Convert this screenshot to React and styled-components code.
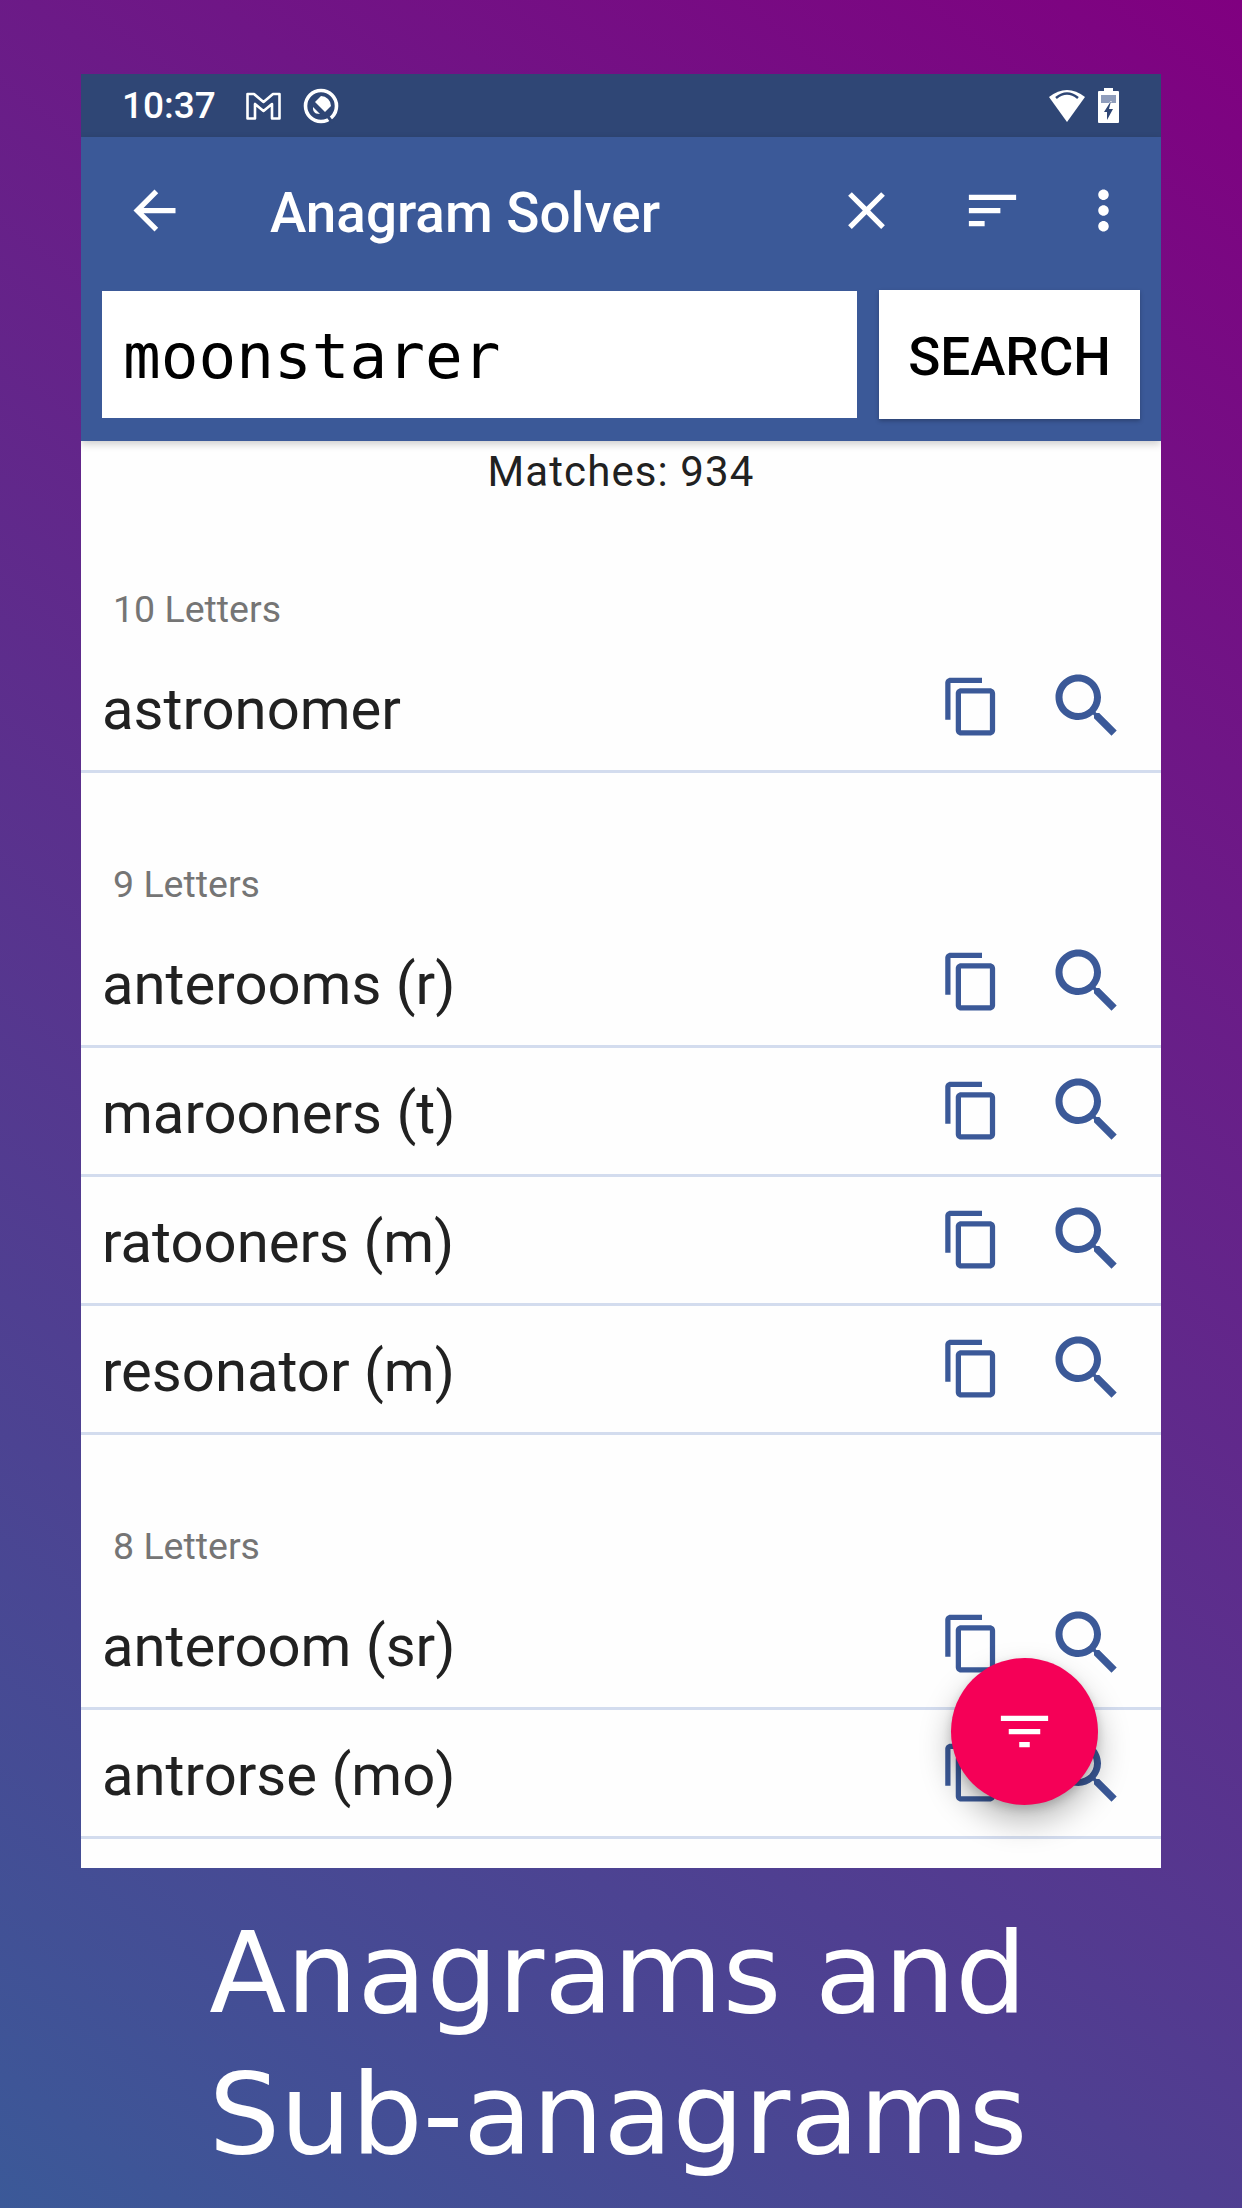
import React from 'react';
import styled, { createGlobalStyle } from 'styled-components';

const GlobalStyle = createGlobalStyle`
  html, body {
    margin: 0;
    padding: 0;
  }
  * { box-sizing: border-box; }
`;

const Page = styled.div`
  width: 1242px;
  height: 2208px;
  overflow: hidden;
  padding-top: 74px;
  background: linear-gradient(37deg, #3b5998 0%, #800080 100%);
  font-family: Roboto, sans-serif;
`;

const Phone = styled.div`
  position: relative;
  width: 1080px;
  height: 1794px;
  margin-left: 81px;
  background: #fefefe;
  overflow: hidden;
`;

const StatusBar = styled.div`
  height: 63px;
  background: #2f4675;
  display: flex;
  align-items: center;
  padding: 0 42px 0 41px;
  color: #fff;
`;

const Time = styled.span`
  font-size: 37px;
  font-weight: 500;
  margin-right: 30px;
`;

const MailGlyph = styled.svg`
  width: 35px;
  height: 28px;
  fill: none;
  stroke: #fff;
  stroke-width: 2.6;
  stroke-linejoin: round;
`;

const RingGlyph = styled.svg`
  width: 38px;
  height: 38px;
  margin-left: 21px;
`;

const StatusRight = styled.div`
  margin-left: auto;
  display: flex;
  align-items: center;
  gap: 13px;
`;

const AppBar = styled.header`
  background: #3b5998;
  height: 304px;
  box-shadow: 0 3px 8px rgba(0, 0, 0, 0.2);
  position: relative;
  z-index: 1;
`;

const Toolbar = styled.div`
  height: 146px;
  display: flex;
  align-items: center;
  padding: 0 26px 0 42px;
  color: #fff;
`;

const Title = styled.h1`
  margin: 0 auto 0 84px;
  padding-top: 6px;
  font-size: 54.8px;
  font-weight: 500;
  color: #fff;
`;

const ActionIcon = styled.svg`
  width: 63px;
  height: 63px;
  fill: currentColor;
  margin-left: ${({ $gap }) => $gap || 0}px;
  flex-shrink: 0;
`;

const SearchRow = styled.div`
  display: flex;
  align-items: center;
  margin-top: 7px;
  padding: 0 21px;
  gap: 22px;
`;

const SearchField = styled.div`
  flex: 1;
  height: 127px;
  background: #fff;
  padding: 4px 0 0 21px;
  display: flex;
  align-items: center;
  font-family: "DejaVu Sans Mono", monospace;
  font-size: 62.7px;
  color: #000;
`;

const SearchButton = styled.button`
  width: 261px;
  height: 129px;
  border: 0;
  padding: 4px 0 0;
  background: #fff;
  color: #000;
  font-family: Roboto, sans-serif;
  font-size: 53px;
  font-weight: 500;
  box-shadow: 0 2px 4px rgba(0, 0, 0, 0.25);
`;

const Matches = styled.div`
  height: 57px;
  text-align: center;
  font-size: 42px;
  line-height: 62px;
  letter-spacing: 1.1px;
  color: #212121;
`;

const SectionLabel = styled.div`
  height: 146px;
  padding: 88px 0 0 32px;
  font-size: 37.5px;
  line-height: 46px;
  color: #757575;
`;

const Row = styled.div`
  height: 129px;
  border-bottom: 3px solid #d3dcee;
  display: flex;
  align-items: center;
  padding: 0 32px 2px 21px;
`;

const Word = styled.span`
  flex: 1;
  padding-top: 6px;
  font-size: 58px;
  color: #212121;
`;

const CopyIcon = styled.svg`
  width: 63px;
  height: 63px;
  fill: #3b5998;
`;

const FindIcon = styled.svg`
  width: 84px;
  height: 84px;
  margin-left: 42px;
  fill: #3b5998;
`;

const Fab = styled.button`
  position: absolute;
  right: 63px;
  bottom: 63px;
  width: 147px;
  height: 147px;
  border: 0;
  padding: 0;
  border-radius: 50%;
  background: #f50057;
  color: #fff;
  display: flex;
  align-items: center;
  justify-content: center;
  box-shadow: 0 16px 32px rgba(0, 0, 0, 0.28), 0 4px 10px rgba(0, 0, 0, 0.16);
`;

const Caption = styled.div`
  text-align: center;
  font-family: "DejaVu Sans", sans-serif;
  font-size: 112.5px;
  line-height: 141px;
  word-spacing: -2px;
  color: #fff;
  padding: 35px 6px 0 0;
`;

const sections = [
  { label: '10 Letters', words: ['astronomer'] },
  { label: '9 Letters', words: ['anterooms (r)', 'marooners (t)', 'ratooners (m)', 'resonator (m)'] },
  { label: '8 Letters', words: ['anteroom (sr)', 'antrorse (mo)'] },
];

export default function App() {
  return (
    <Page>
      <GlobalStyle />
      <Phone>
        <StatusBar>
          <Time>10:37</Time>
          <MailGlyph viewBox="0 0 35 28">
            <path d="M1.500 2H8l9.500 8L27 2h6.500v24.500H26V12l-8.500 7L9 12v14.500H1.500z" />
          </MailGlyph>
          <RingGlyph viewBox="0 0 38 38">
            <circle cx="19" cy="19" r="15.500" fill="none" stroke="#fff" strokeWidth="3.600" />
            <path d="M19 9a10 10 0 0 1 10 10l-6 6-10-10z" fill="#fff" />
            <path d="M11 20l7 7-4-.5q-3.500-2-3-6.500z" fill="#fff" />
            <path d="M24 27l6 8" stroke="#2f4675" strokeWidth="3" />
          </RingGlyph>
          <StatusRight>
            <svg width="36" height="34" viewBox="0 0 36 34">
              <path d="M18 33L0 8Q18-6 36 8z" fill="#fff" />
              <path d="M7 9Q18 0 29 9" fill="none" stroke="#2f4675" strokeWidth="2.600" />
            </svg>
            <svg width="21" height="35" viewBox="0 0 21 35">
              <path d="M6 0h9v3h5a1 1 0 0 1 1 1v30a1 1 0 0 1-1 1H1a1 1 0 0 1-1-1V4a1 1 0 0 1 1-1h5z" fill="#fff" />
              <path d="M3 7h15v8H3z" fill="#8f9dbc" />
              <path d="M13 13L6 24h3v8l6-11h-4z" fill="#2f4675" stroke="#fff" strokeWidth="1" paintOrder="stroke" />
            </svg>
          </StatusRight>
        </StatusBar>

        <AppBar>
          <Toolbar>
            <ActionIcon viewBox="0 0 24 24">
              <path d="M20 11H7.830l5.590-5.590L12 4l-8 8 8 8 1.410-1.410L7.830 13H20v-2z" />
            </ActionIcon>
            <Title>Anagram Solver</Title>
            <ActionIcon viewBox="0 0 24 24">
              <path d="M19 6.410L17.590 5 12 10.590 6.410 5 5 6.410 10.590 12 5 17.590 6.410 19 12 13.410 17.590 19 19 17.590 13.410 12z" />
            </ActionIcon>
            <ActionIcon viewBox="0 0 24 24" $gap={63}>
              <path d="M3 18h6v-2H3v2zM3 6v2h18V6H3zm0 7h12v-2H3v2z" />
            </ActionIcon>
            <ActionIcon viewBox="0 0 24 24" $gap={48}>
              <path d="M12 8c1.100 0 2-.9 2-2s-.9-2-2-2-2 .9-2 2 .9 2 2 2zm0 2c-1.100 0-2 .9-2 2s.9 2 2 2 2-.9 2-2-.9-2-2-2zm0 6c-1.100 0-2 .9-2 2s.9 2 2 2 2-.9 2-2-.9-2-2-2z" />
            </ActionIcon>
          </Toolbar>
          <SearchRow>
            <SearchField>moonstarer</SearchField>
            <SearchButton>SEARCH</SearchButton>
          </SearchRow>
        </AppBar>

        <Matches>Matches: 934</Matches>

        {sections.map((section) => (
          <section key={section.label}>
            <SectionLabel>{section.label}</SectionLabel>
            {section.words.map((word) => (
              <Row key={word}>
                <Word>{word}</Word>
                <CopyIcon viewBox="0 0 24 24">
                  <path d="M16 1H4c-1.100 0-2 .9-2 2v14h2V3h12V1zm3 4H8c-1.100 0-2 .9-2 2v14c0 1.100.9 2 2 2h11c1.100 0 2-.9 2-2V7c0-1.100-.9-2-2-2zm0 16H8V7h11v14z" />
                </CopyIcon>
                <FindIcon viewBox="0 0 24 24">
                  <path d="M15.500 14h-.79l-.28-.27C15.410 12.590 16 11.110 16 9.500 16 5.910 13.090 3 9.500 3S3 5.910 3 9.500 5.910 16 9.500 16c1.610 0 3.090-.59 4.230-1.570l.27.28v.79l5 4.990L20.490 19l-4.990-5zm-6 0C7.010 14 5 11.990 5 9.500S7.010 5 9.500 5 14 7.010 14 9.500 11.990 14 9.500 14z" />
                </FindIcon>
              </Row>
            ))}
          </section>
        ))}

        <Fab>
          <ActionIcon viewBox="0 0 24 24">
            <path d="M10 18h4v-2h-4v2zM3 6v2h18V6H3zm3 7h12v-2H6v2z" />
          </ActionIcon>
        </Fab>
      </Phone>
      <Caption>
        Anagrams and
        <br />
        Sub-anagrams
      </Caption>
    </Page>
  );
}
